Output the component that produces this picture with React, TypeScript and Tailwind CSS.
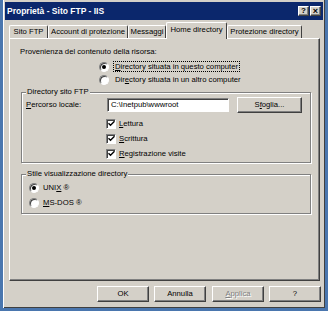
import React from 'react';

const raised =
  'border border-t-white border-l-white border-r-[#404040] border-b-[#404040] shadow-[inset_-1px_-1px_0_#808080]';

const Btn = ({ children, className = '' }: { children: React.ReactNode; className?: string }) => (
  <div className={`flex items-center justify-center bg-[#d4d0c8] ${raised} ${className}`}>{children}</div>
);

const Radio = ({ checked = false }: { checked?: boolean }) => (
  <span className="flex items-center justify-center w-[10px] h-[10px] shrink-0 rounded-full bg-white border border-t-[#808080] border-l-[#808080] border-r-white border-b-white shadow-[inset_1px_1px_0_#404040]">
    {checked && <span className="w-[4px] h-[4px] rounded-full bg-black" />}
  </span>
);

const Check = () => (
  <span className="flex items-center justify-center w-[10px] h-[10px] shrink-0 bg-white border border-t-[#808080] border-l-[#808080] border-r-white border-b-white shadow-[inset_1px_1px_0_#404040]">
    <svg width="7" height="7" viewBox="0 0 7 7">
      <path d="M0.5 3.2 L2.5 5.2 L6.5 1.2" stroke="#000" strokeWidth="1.4" fill="none" />
    </svg>
  </span>
);

const Group = ({ label, children, className = '' }: { label: string; children: React.ReactNode; className?: string }) => (
  <div
    className={`relative ml-[11px] w-[290px] border border-[#808080] shadow-[1px_1px_0_#fff,inset_1px_1px_0_#fff] ${className}`}
  >
    <span className="absolute -top-[6px] left-[4px] bg-[#d4d0c8] px-[1px] leading-[10px]">{label}</span>
    {children}
  </div>
);

const tabs = [
  { label: 'Sito FTP', w: 'w-[39px]' },
  { label: 'Account di protezione', w: 'w-[80px]' },
  { label: 'Messaggi', w: 'w-[38px]' },
  { label: 'Home directory', w: 'w-[61px]', active: true },
  { label: 'Protezione directory', w: 'w-[75px]' },
];

export default function App() {
  return (
    <div className="w-[328px] h-[311px] bg-[#4a76ae] px-[3px] pb-[3px] font-['Liberation_Sans',Arial,sans-serif] text-[7.7px] text-black leading-[10px]">
      <div className="w-[322px] h-[308px] bg-[#d4d0c8] shadow-[inset_1px_0_0_#fff,inset_-1px_-1px_0_#404040] flex flex-col">
        {/* title bar */}
        <div className="mx-[2px] mt-[2px] h-[18px] bg-[#0b276c] flex items-center pl-[2px]">
          <span className="text-white font-bold text-[8.5px]">Proprietà - Sito FTP - IIS</span>
          <div className="ml-auto mr-[2px] flex gap-[1px]">
            <Btn className="w-[11px] h-[10px] text-[8px] font-bold leading-none">?</Btn>
            <Btn className="w-[11px] h-[10px] text-[9px] font-bold leading-none">×</Btn>
          </div>
        </div>

        {/* tabs */}
        <div className="relative z-10 ml-[6px] mt-[3px] h-[15px] flex items-end">
          {tabs.map((t) =>
            t.active ? (
              <div
                key={t.label}
                className={`${t.w} -mb-px h-[17px] bg-[#d4d0c8] border-t border-l border-r border-t-white border-l-white border-r-[#404040] rounded-t-[2px] flex items-start justify-center pt-[2px]`}
              >
                {t.label}
              </div>
            ) : (
              <div
                key={t.label}
                className={`${t.w} h-[13px] border-t border-l border-r border-t-white border-l-white border-r-[#404040] rounded-t-[2px] flex items-center justify-center`}
              >
                {t.label}
              </div>
            )
          )}
        </div>

        {/* panel */}
        <div className="ml-[6px] w-[311px] h-[243px] border border-t-white border-l-white border-r-[#404040] border-b-[#404040] shadow-[inset_-1px_-1px_0_#808080] flex flex-col">
          <div className="mt-[8px] pl-[10px] h-[10px]">Provenienza del contenuto della risorsa:</div>
          <div className="mt-[3px] ml-[89px] h-[13px] flex items-center gap-[4px]">
            <Radio checked />
            <span className="border border-dotted border-black px-[1px] leading-[9px]">
              <span className="underline">D</span>irectory situata in questo computer
            </span>
          </div>
          <div className="ml-[89px] h-[13px] flex items-center gap-[4px]">
            <Radio />
            <span className="pl-[2px]">
              Dir<span className="underline">e</span>ctory situata in un altro computer
            </span>
          </div>

          <Group label="Directory sito FTP" className="mt-[6px] h-[71px]">
            <div className="mt-[4px] pl-[4px] h-[16px] flex items-center">
              <span className="w-[81px]">
                <span className="underline">P</span>ercorso locale:
              </span>
              <div className="w-[122px] h-[14px] bg-white border border-t-[#808080] border-l-[#808080] border-r-white border-b-white shadow-[inset_1px_1px_0_#404040] flex items-center pl-[3px]">
                C:\Inetpub\wwwroot
              </div>
              <Btn className="ml-[8px] w-[65px] h-[16px]">
                <span>
                  S<span className="underline">f</span>oglia...
                </span>
              </Btn>
            </div>
            <div className="mt-[3px] pl-[84px] flex flex-col">
              {[
                ['L', 'ettura'],
                ['S', 'crittura'],
                ['R', 'egistrazione visite'],
              ].map(([a, b]) => (
                <div key={b} className="h-[15px] flex items-center gap-[3px]">
                  <Check />
                  <span>
                    <span className="underline">{a}</span>
                    {b}
                  </span>
                </div>
              ))}
            </div>
          </Group>

          <Group label="Stile visualizzazione directory" className="mt-[11px] h-[40px]">
            <div className="pt-[5px] pl-[7px] flex flex-col">
              <div className="h-[15px] flex items-center gap-[4px]">
                <Radio checked />
                <span>
                  UNI<span className="underline">X</span> ®
                </span>
              </div>
              <div className="h-[15px] flex items-center gap-[4px]">
                <Radio />
                <span>
                  <span className="underline">M</span>S-DOS ®
                </span>
              </div>
            </div>
          </Group>
        </div>

        {/* buttons */}
        <div className="mt-[5px] ml-[94px] flex">
          <Btn className="w-[52px] h-[16px]">OK</Btn>
          <Btn className="ml-[5px] w-[52px] h-[16px]">Annulla</Btn>
          <Btn className="ml-[6px] w-[52px] h-[16px] text-[#808080] [text-shadow:1px_1px_0_#fff]">
            <span>
              <span className="underline">A</span>pplica
            </span>
          </Btn>
          <Btn className="ml-[5px] w-[52px] h-[16px]">?</Btn>
        </div>
      </div>
    </div>
  );
}
